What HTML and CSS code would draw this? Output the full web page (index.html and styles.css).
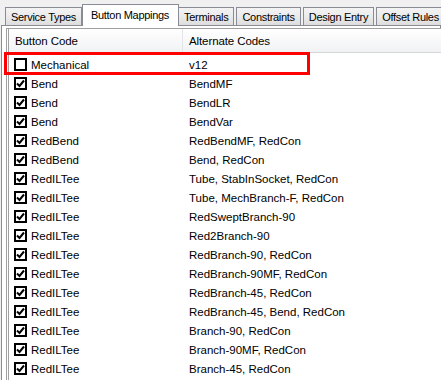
FILE: index.html
```html
<!DOCTYPE html>
<html lang="en">
<head>
  <meta charset="UTF-8">
  <title>Button Mappings</title>
  <link rel="stylesheet" href="styles.css">
</head>
<body>
  <div class="window">
    <div class="tabs">
      <div class="tab">Service Types</div>
      <div class="tab active">Button Mappings</div>
      <div class="tab">Terminals</div>
      <div class="tab">Constraints</div>
      <div class="tab">Design Entry</div>
      <div class="tab">Offset Rules</div>
      <div class="tab stub"></div>
    </div>

    <div class="panel">
      <div class="list">
        <div class="list-header">
          <div class="col col-code">Button Code</div>
          <div class="col col-alt">Alternate Codes</div>
        </div>
        <div class="list-body" id="list-body">
          <!-- rows are rendered here -->
        </div>
      </div>
    </div>

    <div class="highlight"></div>
  </div>

  <script>
    // Button code -> alternate codes
    const mappings = [
      { code: 'Mechanical', alt: 'v12', checked: false },
      { code: 'Bend', alt: 'BendMF', checked: true },
      { code: 'Bend', alt: 'BendLR', checked: true },
      { code: 'Bend', alt: 'BendVar', checked: true },
      { code: 'RedBend', alt: 'RedBendMF, RedCon', checked: true },
      { code: 'RedBend', alt: 'Bend, RedCon', checked: true },
      { code: 'RedILTee', alt: 'Tube, StabInSocket, RedCon', checked: true },
      { code: 'RedILTee', alt: 'Tube, MechBranch-F, RedCon', checked: true },
      { code: 'RedILTee', alt: 'RedSweptBranch-90', checked: true },
      { code: 'RedILTee', alt: 'Red2Branch-90', checked: true },
      { code: 'RedILTee', alt: 'RedBranch-90, RedCon', checked: true },
      { code: 'RedILTee', alt: 'RedBranch-90MF, RedCon', checked: true },
      { code: 'RedILTee', alt: 'RedBranch-45, RedCon', checked: true },
      { code: 'RedILTee', alt: 'RedBranch-45, Bend, RedCon', checked: true },
      { code: 'RedILTee', alt: 'Branch-90, RedCon', checked: true },
      { code: 'RedILTee', alt: 'Branch-90MF, RedCon', checked: true },
      { code: 'RedILTee', alt: 'Branch-45, RedCon', checked: true }
    ];

    const listBody = document.getElementById('list-body');
    const checkSvg = '<svg viewBox="0 0 9 9" width="9" height="9"><polyline points="1,4.5 3.5,7 8,1.5" fill="none" stroke="#000" stroke-width="2"/></svg>';

    mappings.forEach(item => {
      const row = document.createElement('div');
      row.classList.add('row');
      row.innerHTML = `
        <div class="col col-code">
          <span class="checkbox">${item.checked ? checkSvg : ''}</span>
          <span>${item.code}</span>
        </div>
        <div class="col col-alt">${item.alt}</div>
      `;
      listBody.appendChild(row);
    });
  </script>
</body>
</html>
```

FILE: styles.css
```css
:root {
  --page: #f0f0f0;
  --tab-border: #898c95;
  --list-border: #a0a0a0;
  --header-line: #d5d5d5;
  --mark: #ff0000;
}

* {
  margin: 0;
  padding: 0;
  box-sizing: border-box;
}

body {
  width: 441px;
  height: 380px;
  overflow: hidden;
  background-color: var(--page);
  color: #000;
  font-family: 'Liberation Sans', Arial, sans-serif;
  font-size: 11.5px;
}

.window {
  position: relative;
  width: 441px;
  height: 380px;
}

/* Tab strip */
.tabs {
  display: flex;
  align-items: flex-end;
  height: 25px;
  padding-left: 5px;
  position: relative;
  z-index: 1;
}

.tab {
  height: 18px;
  padding: 0 5px;
  margin-right: 2px;
  display: flex;
  align-items: center;
  border: 1px solid var(--tab-border);
  border-bottom: none;
  background: linear-gradient(#f3f3f3 0%, #ebebeb 50%, #dddddd 100%);
  font-size: 11px;
  letter-spacing: -0.3px;
  white-space: nowrap;
}

.tab.active {
  height: 22px;
  margin: 0 0 -1px -2px;
  padding: 0 9px 2px 8px;
  background: #fff;
}

.tab.active + .tab {
  margin-left: -1px;
}

.tab.stub {
  width: 20px;
}

/* Page panel */
.panel {
  margin-left: 1px;
  height: 360px;
  border: 1px solid var(--tab-border);
  background-color: #fff;
  padding: 2px 0 0 4px;
}

.list {
  width: 460px;
  height: 100%;
  border-top: 1px solid var(--list-border);
  border-left: 3px double var(--list-border);
  background-color: #fff;
}

.list-header {
  display: flex;
  height: 24px;
  background: linear-gradient(#ffffff, #f1f2f4);
  border-bottom: 1px solid var(--header-line);
  font-size: 11.5px;
  letter-spacing: -0.1px;
}

.list-header .col {
  display: flex;
  align-items: center;
}

.list-header .col-code {
  border-right: 1px solid #e3e5e8;
  padding-left: 6px;
}

.list-body {
  padding-top: 2px;
}

.row {
  display: flex;
  height: 19px;
}

.col {
  flex-shrink: 0;
  white-space: nowrap;
}

.col-code {
  width: 174px;
}

.col-alt {
  padding-left: 6px;
}

.row .col {
  display: flex;
  align-items: center;
}

.row .col-code {
  padding-left: 5px;
  gap: 4px;
}

.checkbox {
  width: 13px;
  height: 13px;
  border: 2px solid #000;
  background-color: #fff;
  display: flex;
  align-items: center;
  justify-content: center;
}

.checkbox svg {
  display: block;
}

/* Red marker drawn over the selected row */
.highlight {
  position: absolute;
  left: 4px;
  top: 52px;
  width: 306px;
  height: 23px;
  border: 3px solid var(--mark);
  pointer-events: none;
}
```
